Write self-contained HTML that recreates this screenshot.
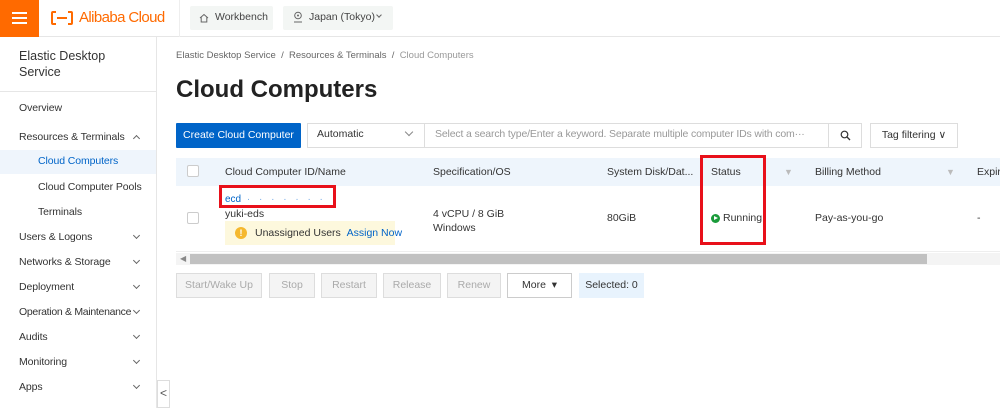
<!DOCTYPE html>
<html><head><meta charset="utf-8"><style>
*{margin:0;padding:0;box-sizing:border-box}
body{width:1000px;height:408px;overflow:hidden;background:#fff;font-family:"Liberation Sans",sans-serif;color:#333;position:relative;font-size:10.5px}
.a{position:absolute;white-space:nowrap}
.btn{position:absolute;border:1px solid #ddd;background:#f4f4f4;color:#aaa;font-size:10.5px;text-align:center;line-height:22px;height:25px}
.side{font-size:10.5px;color:#333;letter-spacing:-0.1px}
.chev{position:absolute;left:134px;width:5px;height:5px;border-right:1px solid #666;border-bottom:1px solid #666;transform:rotate(45deg)}
</style></head><body>
<!-- header -->
<div class="a" style="left:0;top:0;width:1000px;height:37px;border-bottom:1px solid #e6e6e6"></div>
<div class="a" style="left:0;top:0;width:39px;height:37px;background:#ff6a00"></div>
<div class="a" style="left:12px;top:12px;width:15px;height:2px;background:#fff"></div>
<div class="a" style="left:12px;top:17px;width:15px;height:2px;background:#fff"></div>
<div class="a" style="left:12px;top:22px;width:15px;height:2px;background:#fff"></div>
<div class="a" style="left:51px;top:11px;width:22px;height:14px;border:2.5px solid #ff6a00;border-radius:2px"></div>
<div class="a" style="left:56px;top:8px;width:12px;height:20px;background:#fff"></div>
<div class="a" style="left:57px;top:16.5px;width:10px;height:2.5px;background:#ff6a00"></div>
<div class="a" style="left:79px;top:9px;font-size:15px;color:#ff6a00;letter-spacing:-0.6px">Alibaba Cloud</div>
<div class="a" style="left:179px;top:0;width:1px;height:37px;background:#eee"></div>
<div class="a" style="left:190px;top:6px;width:83px;height:24px;background:#f3f6f4;border-radius:2px"></div>
<svg class="a" style="left:199px;top:13px" width="10" height="10" viewBox="0 0 10 10"><path d="M1 5 L5 1.5 L9 5 M2.2 4 V9 H7.8 V4" fill="none" stroke="#666" stroke-width="1"/></svg>
<div class="a" style="left:215px;top:11px;font-size:10.5px;color:#444">Workbench</div>
<div class="a" style="left:283px;top:6px;width:110px;height:24px;background:#f3f6f4;border-radius:2px"></div>
<svg class="a" style="left:293px;top:11px" width="10" height="12" viewBox="0 0 10 12"><circle cx="5" cy="4.5" r="3.3" fill="none" stroke="#666"/><circle cx="5" cy="4.5" r="1" fill="#666"/><path d="M1 11 H9" stroke="#666"/></svg>
<div class="a" style="left:309px;top:11px;font-size:10.5px;color:#444">Japan (Tokyo)</div>
<div class="a" style="left:377px;top:13px;width:4px;height:4px;border-right:1px solid #666;border-bottom:1px solid #666;transform:rotate(45deg)"></div>
<!-- sidebar -->
<div class="a" style="left:156px;top:37px;width:1px;height:371px;background:#e6e6e6"></div>
<div class="a" style="left:19px;top:48px;font-size:12.5px;color:#333;line-height:16px;white-space:normal;width:120px">Elastic Desktop Service</div>
<div class="a" style="left:0;top:91px;width:156px;height:1px;background:#e6e6e6"></div>
<div class="a side" style="left:19px;top:102px">Overview</div>
<div class="a side" style="left:19px;top:131px">Resources &amp; Terminals</div>
<div class="a" style="left:134px;top:136px;width:5px;height:5px;border-left:1px solid #666;border-top:1px solid #666;transform:rotate(45deg)"></div>
<div class="a" style="left:0;top:150px;width:156px;height:24px;background:#eff5fc"></div>
<div class="a side" style="left:38px;top:155px;color:#0064c8">Cloud Computers</div>
<div class="a side" style="left:38px;top:181px">Cloud Computer Pools</div>
<div class="a side" style="left:38px;top:206px">Terminals</div>
<div class="a side" style="left:19px;top:231px">Users &amp; Logons</div><div class="chev" style="top:233px"></div>
<div class="a side" style="left:19px;top:256px">Networks &amp; Storage</div><div class="chev" style="top:258px"></div>
<div class="a side" style="left:19px;top:281px">Deployment</div><div class="chev" style="top:283px"></div>
<div class="a side" style="left:19px;top:306px;letter-spacing:-0.3px">Operation &amp; Maintenance</div><div class="chev" style="top:308px"></div>
<div class="a side" style="left:19px;top:331px">Audits</div><div class="chev" style="top:333px"></div>
<div class="a side" style="left:19px;top:356px">Monitoring</div><div class="chev" style="top:358px"></div>
<div class="a side" style="left:19px;top:381px">Apps</div><div class="chev" style="top:383px"></div>
<div class="a" style="left:157px;top:380px;width:13px;height:28px;border:1px solid #ddd;background:#fff;color:#555;font-size:12px;text-align:center;line-height:24px">&lt;</div>
<!-- main -->
<div class="a" style="left:176px;top:50px;font-size:9.5px;color:#666">Elastic Desktop Service &nbsp;/ &nbsp;Resources &amp; Terminals &nbsp;/ &nbsp;<span style="color:#999">Cloud Computers</span></div>
<div class="a" style="left:176px;top:76px;font-size:24px;font-weight:bold;color:#222">Cloud Computers</div>
<div class="a" style="left:176px;top:123px;width:125px;height:25px;background:#0064c8;border-radius:1px;color:#fff;text-align:center;line-height:25px;font-size:10.5px">Create Cloud Computer</div>
<div class="a" style="left:307px;top:123px;width:118px;height:25px;border:1px solid #ddd"></div>
<div class="a" style="left:317px;top:128px;font-size:10.5px;color:#333">Automatic</div>
<div class="a" style="left:406px;top:129px;width:6px;height:6px;border-right:1px solid #888;border-bottom:1px solid #888;transform:rotate(45deg)"></div>
<div class="a" style="left:424px;top:123px;width:405px;height:25px;border:1px solid #ddd"></div>
<div class="a" style="left:435px;top:128px;font-size:10.5px;color:#999;letter-spacing:-0.15px">Select a search type/Enter a keyword. Separate multiple computer IDs with com···</div>
<div class="a" style="left:828px;top:123px;width:34px;height:25px;border:1px solid #ddd"></div>
<svg class="a" style="left:840px;top:130px" width="11" height="11" viewBox="0 0 11 11"><circle cx="4.5" cy="4.5" r="3.3" fill="none" stroke="#333" stroke-width="1.2"/><path d="M7 7 L10 10" stroke="#333" stroke-width="1.3"/></svg>
<div class="a" style="left:870px;top:123px;width:88px;height:25px;border:1px solid #ddd;text-align:center;line-height:23px;font-size:10.5px;color:#333">Tag filtering ∨</div>
<!-- table -->
<div class="a" style="left:176px;top:158px;width:824px;height:28px;background:#eef5fc"></div>
<div class="a" style="left:187px;top:165px;width:12px;height:12px;border:1px solid #ccc;background:#fff;border-radius:2px"></div>
<div class="a" style="left:225px;top:166px;font-size:10.5px;color:#333">Cloud Computer ID/Name</div>
<div class="a" style="left:433px;top:166px;font-size:10.5px;color:#333">Specification/OS</div>
<div class="a" style="left:607px;top:166px;font-size:10.5px;color:#333">System Disk/Dat...</div>
<div class="a" style="left:711px;top:166px;font-size:10.5px;color:#333">Status</div>
<div class="a" style="left:784px;top:167px;color:#bbb;font-size:9px">▼</div>
<div class="a" style="left:815px;top:166px;font-size:10.5px;color:#333">Billing Method</div>
<div class="a" style="left:946px;top:167px;color:#bbb;font-size:9px">▼</div>
<div class="a" style="left:977px;top:166px;font-size:10.5px;color:#333">Expira</div>
<div class="a" style="left:176px;top:251px;width:824px;height:1px;background:#eee"></div>
<div class="a" style="left:187px;top:212px;width:12px;height:12px;border:1px solid #ccc;border-radius:2px"></div>
<div class="a" style="left:225px;top:194px;font-size:10px;color:#0064c8">ecd<span style="letter-spacing:3px;color:#7aaee8"> · · · ·  · · ·</span></div>
<div class="a" style="left:219px;top:185px;width:117px;height:23px;border:3px solid #e8101a"></div>
<div class="a" style="left:225px;top:208px;font-size:10.5px;color:#333">yuki-eds</div>
<div class="a" style="left:225px;top:221px;width:170px;height:24px;background:#fdf8dd"></div>
<div class="a" style="left:235px;top:227px;width:12px;height:12px;border-radius:50%;background:#f5b82e;color:#fff;font-size:9px;text-align:center;line-height:12px;font-weight:bold">!</div>
<div class="a" style="left:255px;top:227px;font-size:10.5px;color:#333">Unassigned Users &nbsp;<span style="color:#0064c8">Assign Now</span></div>
<div class="a" style="left:433px;top:207px;font-size:10.5px;color:#333;line-height:14px">4 vCPU / 8 GiB<br>Windows</div>
<div class="a" style="left:607px;top:212px;font-size:10.5px;color:#333">80GiB</div>
<div class="a" style="left:711px;top:214px;width:9px;height:9px;border-radius:50%;background:#1a9b3a"></div>
<div class="a" style="left:714px;top:216px;width:0;height:0;border-left:4px solid #fff;border-top:2.5px solid transparent;border-bottom:2.5px solid transparent"></div>
<div class="a" style="left:723px;top:212px;font-size:10.5px;color:#333">Running</div>
<div class="a" style="left:700px;top:155px;width:66px;height:90px;border:3px solid #e8101a"></div>
<div class="a" style="left:815px;top:212px;font-size:10.5px;color:#333">Pay-as-you-go</div>
<div class="a" style="left:977px;top:212px;font-size:10.5px;color:#333">-</div>
<!-- scrollbar -->
<div class="a" style="left:176px;top:253px;width:824px;height:12px;background:#f4f4f4"></div>
<div class="a" style="left:180px;top:254px;font-size:8px;color:#888">◀</div>
<div class="a" style="left:190px;top:254px;width:737px;height:10px;background:#c1c1c1"></div>
<!-- buttons -->
<div class="btn" style="left:176px;top:273px;width:86px">Start/Wake Up</div>
<div class="btn" style="left:269px;top:273px;width:46px">Stop</div>
<div class="btn" style="left:321px;top:273px;width:56px">Restart</div>
<div class="btn" style="left:383px;top:273px;width:58px">Release</div>
<div class="btn" style="left:447px;top:273px;width:54px">Renew</div>
<div class="btn" style="left:507px;top:273px;width:65px;background:#fff;color:#333;border-color:#ccc">More &nbsp;▾</div>
<div class="a" style="left:579px;top:273px;width:65px;height:25px;background:#e8f3fd;color:#333;font-size:10.5px;text-align:center;line-height:24px">Selected: 0</div>
</body></html>
